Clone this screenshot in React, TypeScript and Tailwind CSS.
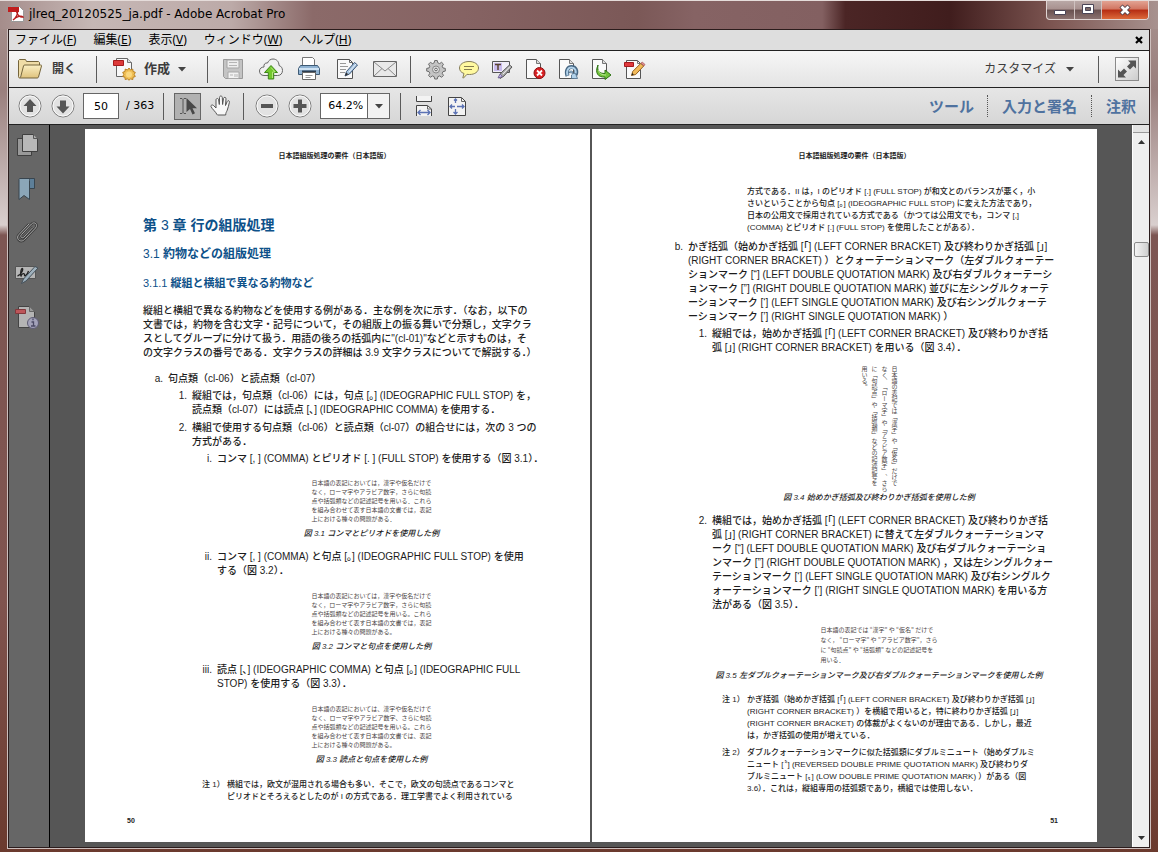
import React from 'react';

const Menu = ({ name, mnemonic }: { name: string, mnemonic: string }) => (
  <button className="whitespace-nowrap leading-[20px]">
    {name}(<span className="underline underline-offset-1">{mnemonic}</span>)
  </button>
);

const Divider = () => <div className="h-[27px] w-px shrink-0 bg-[#5a5a5a]" />;

const DownArrow = () => (
  <svg width="8" height="5" viewBox="0 0 8 5" className="shrink-0"><path d="M0 0h8L4 4.6z" fill="#444" /></svg>
);

const IconButton = ({ label, children, className }: { label: string, children: React.ReactNode, className?: string }) => (
  <button aria-label={label} className={className || "flex h-6 w-6 shrink-0 items-center justify-center"}>
    <svg width="24" height="24" viewBox="0 0 24 24" fill="none" className="shrink-0">{children}</svg>
  </button>
);

// Sheet with a folded corner, shared by most of the document icons
const Sheet = ({ fill = '#fafafa' }: { fill?: string }) => (
  <>
    <path d="M3.5 2.5h10l4 4v15h-14z" fill={fill} stroke="#555" />
    <path d="M13.5 2.5v4h4" fill="#ddd" stroke="#777" />
  </>
);

const PdfMark = () => (
  <svg width="16" height="16" viewBox="0 0 16 16">
    <path d="M3.5.5h8l4 4v11h-12z" fill="#fff" stroke="#999" />
    <path d="M0 1h11v5H0z" fill="#c11d1d" />
    <path d="M5 14c3-2 5-6 4.500-9C9 3 7.500 4 9 7c1.500 3 4 4.500 6 4-1.500-1.500-6-1-10 3" fill="none" stroke="#b71c1c" strokeWidth="1.300" />
  </svg>
);

const Folder = () => (
  <svg width="24" height="20" viewBox="0 0 24 20">
    <defs>
      <linearGradient id="folder" x1="0" y1="0" x2="0" y2="1"><stop stopColor="#fbf0c4" /><stop offset="1" stopColor="#dfc27c" /></linearGradient>
    </defs>
    <path d="M.5 17V1.500L1.500.5h6l1 2h12l1 1V8" fill="#efdca6" stroke="#75653c" />
    <path d="M2.500 18.500L5.500 7c.3-.8.6-1 1.200-1h16c.8 0 1 .4.8 1l-3 11c-.3.700-.6 1-1.200 1H1.500C.8 19 .5 18 .5 17" fill="url(#folder)" stroke="#75653c" />
  </svg>
);

const CreatePdf = () => (
  <svg width="24" height="24" viewBox="0 0 24 24">
    <path d="M4.500 1.500h11l4 4v14h-15z" fill="#f8f8f8" stroke="#666" />
    <path d="M15.500 1.500v4h4" fill="#ddd" stroke="#777" />
    <path d="M1.500 3.500h10v5h-10z" fill="#dd3a3a" stroke="#a61c1c" />
    <path d="M17 11l1.500 2 2.300-.9.200 2.400 2.300.8-1.100 2.200 1.100 2-2.300.8-.2 2.300-2.300-.8-1.500 1.500-1.500-1.500-2.300.8-.2-2.300-2.300-.8 1.100-2-1.100-2.200 2.300-.8.200-2.400 2.300.9z" fill="#f0bf55" stroke="#b98022" />
    <circle cx="17" cy="17.500" r="3" fill="#fad880" />
  </svg>
);

const FILE_TOOLS = [
  { label: '保存', icon: (
    <>
      <path d="M2.500 2.500h19v19h-17l-2-2z" fill="#c4c4c4" stroke="#999" />
      <path d="M6 3h12v8H6z" fill="#ededed" stroke="#a5a5a5" /><path d="M8 5.500h8M8 8.500h8" stroke="#b5b5b5" />
      <path d="M7 15h11v6.500H7z" fill="#f2f2f2" stroke="#a8a8a8" /><path d="M14 17v3M16 17v3M9 18h3" stroke="#b5b5b5" />
    </>
  ) },
  { label: 'クラウド', icon: (
    <>
      <path d="M5 18.500C2 18.500.5 16.500.5 14S2.500 10 5 10c-.5-2.500 1-4.500 3.500-4C9.500 3.500 11.500 2 14 2c3.500 0 6 2.500 6 6.500 2 .5 3.500 2.500 3.500 5 0 3-2 5-5 5z" fill="#f1f1f1" stroke="#666" />
      <path d="M12 8.500l6.500 7h-3.800v6.500H9.300v-6.500H5.500z" fill="#72c72d" stroke="#3d8619" />
      <path d="M12 10.500l4 4.500h-2.500v6" stroke="#b3e77c" />
    </>
  ) },
  { label: '印刷', icon: (
    <>
      <path d="M5.500 9V.5h10l2 2V9" fill="#fff" stroke="#777" />
      <path d="M3.500 8.500h17l2 3v6h-21v-6z" fill="#8fb2d2" stroke="#3d5a75" />
      <path d="M2 12h20" stroke="#cfe3f4" strokeWidth="2" />
      <path d="M5 14.500h14" stroke="#2c3f52" strokeWidth="2" />
      <path d="M5.500 15.500h13v7h-13z" fill="#fff" stroke="#666" /><path d="M8.500 18.500h7M8.500 20.500h5" stroke="#999" />
    </>
  ) },
  { label: '編集', icon: (
    <>
      <path d="M2.500 2.500h12l3 3v16h-15z" fill="#f9f9f9" stroke="#555" /><path d="M14.500 2.500v3h3" stroke="#666" />
      <path d="M5 6.500h6M5 9.500h8M5 12.500h6M5 15.500h5" stroke="#999" />
      <path d="M10 19l1.500-4.500 8-9 3 2.500-8 9z" fill="#a9c5e0" stroke="#3e5878" /><path d="M10 19l1.300-3.500 2 1.800z" fill="#333" />
      <path d="M14 15l7-8" stroke="#e8f2fb" />
    </>
  ) },
  { label: '電子メール', icon: (
    <>
      <path d="M.5 4.500h23v15H.5z" fill="#e9e9e9" stroke="#666" />
      <path d="M1 5l11 9L23 5M1 19l8-7.500M23 19l-8-7.500" stroke="#888" />
    </>
  ) },
];

const QUICK_TOOLS = [
  { label: '設定', icon: (
    <>
      <path d="M10.700 3.500h2.600l.5 2.300 1.800.8 2-1.300 1.900 1.900-1.300 2 .8 1.800 2.300.4v2.700l-2.300.5-.8 1.700 1.300 2.100-1.900 1.900-2-1.400-1.800.8-.5 2.300h-2.600l-.5-2.300-1.800-.8-2 1.400-1.900-1.900 1.300-2.100-.8-1.700-2.300-.5v-2.700l2.300-.4.8-1.800-1.300-2 1.900-1.900 2 1.300 1.800-.8z" fill="#c4c4c4" stroke="#6c6c6c" />
      <circle cx="12" cy="12.500" r="3.500" fill="#dcdcdc" stroke="#8a8a8a" /><circle cx="12" cy="12.500" r="1.300" fill="#fff" stroke="#666" />
    </>
  ) },
  { label: 'ノート注釈', icon: (
    <>
      <path d="M12 4.500c5.500 0 9.500 2.800 9.500 6.500s-3.500 6.500-9 6.500c-1 0-2 0-2.500-.2L6.500 21c-.5.300-1 0-.6-.5L7 16.500c-3-1-4.500-3-4.500-5.500 0-3.700 4-6.500 9.500-6.500z" fill="#fff9a0" stroke="#857d5a" />
      <path d="M7 9.500h10M7 12.500h8" stroke="#857d50" />
    </>
  ) },
  { label: 'テキスト編集', icon: (
    <>
      <path d="M2.500 4.500h17v11h-17z" fill="#f0edf7" stroke="#555" /><path d="M4 6h8v8H4z" fill="#c9bbee" />
      <path d="M5 7.500h6M8 7.500v5.500" stroke="#5b4430" strokeWidth="1.500" />
      <path d="M9 20l2-4 8.500-8 2.500 2-8 9-4 2.500z" fill="#aaa" stroke="#555" /><path d="M13 17l7-7.500" stroke="#eee" /><path d="M8 21l2-4 2.500 2.500z" fill="#cabdea" stroke="#6a5b94" strokeWidth=".8" />
    </>
  ) },
  { label: 'ページを削除', icon: (
    <>
      <Sheet />
      <circle cx="16.500" cy="16" r="5.500" fill="#d81f22" stroke="#8f1214" />
      <path d="M14 13.500l5 5M19 13.500l-5 5" stroke="#fff" strokeWidth="1.800" />
    </>
  ) },
  { label: 'ページを回転', icon: (
    <>
      <Sheet />
      <path d="M11.500 19c-2-6 1-9 4-9 4 0 6 3.500 4 8" stroke="#476783" strokeWidth="4" /><path d="M11.500 18.500c-1.500-5.500 1-8 4-8 3.500 0 5.500 3.500 3.500 7" stroke="#b2d2ea" strokeWidth="2" />
      <path d="M13 15.500c1-2 4-2 4 .5 0 1-1 1.500-1.500 2v3.500h6l-2-5z" fill="#b2d2ea" stroke="#476783" strokeWidth=".8" />
    </>
  ) },
  { label: 'ページを抽出', icon: (
    <>
      <Sheet />
      <path d="M9 8c-1 6 1 8.500 7 8.500V13l6 5-6 4.500V20c-7 .5-10.500-4-7-12z" fill="#73c43c" stroke="#2f7416" />
      <path d="M9.500 13c1 3.500 3 5 7.500 5" stroke="#b9e98f" />
    </>
  ) },
  { label: 'PDFを編集', icon: (
    <>
      <path d="M4.500 3.500h11l3 3v15h-14z" fill="#fafafa" stroke="#555" /><path d="M15.500 3.500v3h3" stroke="#777" />
      <path d="M2.500 5.500h9v4h-9z" fill="#e03a3d" stroke="#a5191c" />
      <path d="M9.500 18.500l1.200-4 8-8 3 2.500-8 8.500z" fill="#f3bb5a" stroke="#94601d" /><path d="M19 6.200l3 2.700 1-1.400-2.800-2.500z" fill="#e69090" stroke="#a15050" strokeWidth=".7" /><path d="M9.500 18.500l.8-2.500 1.500 1.600z" fill="#222" />
    </>
  ) },
];

const SIDE_PANELS = [
  { label: 'ページサムネール', icon: (
    <><path d="M2.500 5.500h14v17h-14z" fill="#999" stroke="#3f3f3f" /><path d="M7.500 1.500h11l4 4v13h-15z" fill="#b8b8b8" stroke="#3f3f3f" /><path d="M18.500 1.500v4h4" fill="#aaa" stroke="#555" /></>
  ) },
  { label: 'しおり', icon: (
    <><path d="M13.500 2.500h6v10h-6z" fill="#5d7f99" stroke="#38454f" /><path d="M4.500 2.500h11c-1 .5-1 1-1 2v19l-5.500-4-5 4v-20z" fill="#8ba6b8" stroke="#38454f" /></>
  ) },
  { label: '添付ファイル', icon: (
    <><path d="M18 8.500l-9 9.500c-2 2-4.500-.5-2.500-2.500L16.500 5c3-3 7 .5 4 4L9.500 20.500C5.500 24.500 0 19.500 4 15.500L14 5" stroke="#3d3d3d" strokeWidth="2.500" /><path d="M18 8.500l-9 9.500c-2 2-4.500-.5-2.500-2.500L16.500 5c3-3 7 .5 4 4L9.500 20.500C5.500 24.500 0 19.500 4 15.500L14 5" stroke="#aaa" /></>
  ) },
  { label: '署名', icon: (
    <><path d="M.5 4.500h20v12H.5z" fill="#b5b5b5" stroke="#555" /><path d="M2.500 14c4-1 6-7 5-7.500C6 6 5 13 6 14c1-3 4-3 3.500-1-.3 2 3 0 4-4" stroke="#222" strokeWidth="1.300" /><path d="M6.500 21.500l2-4.500L20 4.500l3 1.500L11 19z" fill="#9fb1bd" stroke="#44505a" /></>
  ) },
  { label: 'モデルツリー', icon: (
    <><path d="M3.500 1.500h11l5 5v16h-16z" fill="#b4b4b4" stroke="#444" /><path d="M14.500 1.500v5h5" fill="#999" stroke="#666" /><path d="M.5 4.500h10v4H.5z" fill="#bd565a" stroke="#82383c" /><circle cx="18" cy="18" r="5.500" fill="#a3a2ba" stroke="#5d5b74" /><path d="M16.500 17h2v4M16 21h4.500M18 13.500v1.800" stroke="#4b4a66" strokeWidth="1.300" /></>
  ) },
];

// One typeset line of the document, broken exactly where the PDF breaks it
const Lines = ({ lines }: { lines: string[] }) => (
  <>{lines.map((line, i) => <span key={i} className="block whitespace-nowrap">{line}</span>)}</>
);

const Item = ({ marker, lines, level, className }: { marker: string, lines: string[], level: 1 | 2 | 3, className: string }) => {
  const width = level === 1 ? 'w-[25px]' : level === 2 ? 'w-[49px]' : 'w-[74px]';
  return (
    <div className={`flex text-[10px] leading-[14px] ${className}`}>
      <span className={`${width} shrink-0 pr-[5px] text-right`}>{marker}</span>
      <p><Lines lines={lines} /></p>
    </div>
  );
};

const Note = ({ marker, lines, className }: { marker: string, lines: string[], className: string }) => (
  <div className={`flex pl-[59px] text-[8px] leading-[12px] ${className}`}>
    <span className="w-[25px] shrink-0 whitespace-nowrap">{marker}</span>
    <p><Lines lines={lines} /></p>
  </div>
);

const Figure = ({ lines, caption, indent, leading, className }: { lines: string[], caption: string, indent: string, leading: string, className: string }) => (
  <figure className={`flex flex-col items-center ${indent} ${className}`}>
    <div className={`font-['Noto_Sans_CJK_JP',sans-serif] text-[6px] font-normal text-[#4a4444] ${leading}`}><Lines lines={lines} /></div>
    <figcaption className="whitespace-nowrap text-[8px] leading-[12px] italic">{caption}</figcaption>
  </figure>
);

const PageHeader = () => (
  <p className="text-center text-[7px] font-bold leading-[12px]">日本語組版処理の要件（日本語版）</p>
);

const sample = (comma: string, stop: string) => [
  `日本語の表記においては${comma}漢字や仮名だけで`,
  `なく${comma}ローマ字やアラビア数字${comma}さらに句読`,
  `点や括弧類などの記述記号を用いる${stop}これら`,
  `を組み合わせて表す日本語の文書では${comma}表記`,
  `上における種々の問題がある${stop}`,
];

const PAGE = "flex min-w-0 flex-1 flex-col overflow-hidden bg-white pt-[21px] pb-[15px] font-['Liberation_Sans','Noto_Sans_CJK_JP',sans-serif] font-medium text-[#1c1c1c]";

const LeftPage = () => (
  <article className={`${PAGE} pl-[58px] pr-[64px]`}>
    <PageHeader />
    <div className="font-bold text-[#0d5189]">
      <h1 className="mt-[53px] text-[14px] leading-[20px]">第 <span className="font-normal">3</span> 章 行の組版処理</h1>
      <h2 className="mt-[9px] text-[12px] leading-[20px]"><span className="font-normal">3.1</span> 約物などの組版処理</h2>
      <h3 className="mt-[9px] text-[11px] leading-[20px]"><span className="font-normal">3.1.1</span> 縦組と横組で異なる約物など</h3>
    </div>
    <p className="mt-[11px] text-[10px] leading-[14px]">
      <Lines lines={[
        '縦組と横組で異なる約物などを使用する例がある．主な例を次に示す．（なお，以下の',
        '文書では，約物を含む文字・記号について，その組版上の振る舞いで分類し，文字クラ',
        'スとしてグループに分けて扱う．用語の後ろの括弧内に"(cl-01)"などと示すものは，そ',
        'の文字クラスの番号である．文字クラスの詳細は 3.9 文字クラスについてで解説する．）',
      ]} />
    </p>
    <Item level={1} marker="a." className="mt-[12px]" lines={['句点類（cl-06）と読点類（cl-07）']} />
    <Item level={2} marker="1." className="mt-[3px]" lines={[
      '縦組では，句点類（cl-06）には，句点 [｡] (IDEOGRAPHIC FULL STOP) を，',
      '読点類（cl-07）には読点 [､] (IDEOGRAPHIC COMMA) を使用する．',
    ]} />
    <Item level={2} marker="2." className="mt-[4px]" lines={['横組で使用する句点類（cl-06）と読点類（cl-07）の組合せには，次の 3 つの', '方式がある．']} />
    <Item level={3} marker="i." className="mt-[3px]" lines={['コンマ [, ] (COMMA) とピリオド [. ] (FULL STOP) を使用する（図 3.1）．']} />
    <Figure indent="ml-[74px]" leading="mb-[5px] leading-[9px]" className="mt-[12px]" lines={sample('，', '．')} caption="図 3.1 コンマとピリオドを使用した例" />
    <Item level={3} marker="ii." className="mt-[10px]" lines={['コンマ [, ] (COMMA) と句点 [｡] (IDEOGRAPHIC FULL STOP) を使用', 'する（図 3.2）．']} />
    <Figure indent="ml-[74px]" leading="mb-[5px] leading-[9px]" className="mt-[13px]" lines={sample('，', '。')} caption="図 3.2 コンマと句点を使用した例" />
    <Item level={3} marker="iii." className="mt-[10px]" lines={['読点 [､] (IDEOGRAPHIC COMMA) と句点 [｡] (IDEOGRAPHIC FULL', 'STOP) を使用する（図 3.3）．']} />
    <Figure indent="ml-[74px]" leading="mb-[5px] leading-[9px]" className="mt-[13px]" lines={sample('、', '。')} caption="図 3.3 読点と句点を使用した例" />
    <Note marker="注 1）" className="mt-[13px]" lines={[
      '横組では，欧文が混用される場合も多い．そこで，欧文の句読点であるコンマと',
      'ピリオドとそろえるとしたのが I の方式である．理工学書でよく利用されている',
    ]} />
    <p className="-ml-4 mt-auto text-[7px] font-bold leading-[12px]">50</p>
  </article>
);

const RightPage = () => (
  <article className={`${PAGE} pl-[71px] pr-[51px]`}>
    <PageHeader />
    <Note marker="" className="mt-[24px]" lines={[
      '方式である．II は，I のピリオド [.] (FULL STOP) が和文とのバランスが悪く，小',
      'さいということから句点 [｡] (IDEOGRAPHIC FULL STOP) に変えた方法であり，',
      '日本の公用文で採用されている方式である（かつては公用文でも，コンマ [,]',
      '(COMMA) とピリオド [.] (FULL STOP) を使用したことがある）．',
    ]} />
    <Item level={1} marker="b." className="mt-[6px]" lines={[
      'かぎ括弧（始めかぎ括弧 [｢] (LEFT CORNER BRACKET) 及び終わりかぎ括弧 [｣]',
      '(RIGHT CORNER BRACKET) ）とクォーテーションマーク（左ダブルクォーテー',
      'ションマーク [“] (LEFT DOUBLE QUOTATION MARK) 及び右ダブルクォーテーシ',
      'ョンマーク [”] (RIGHT DOUBLE QUOTATION MARK) 並びに左シングルクォーテ',
      'ーションマーク [‘] (LEFT SINGLE QUOTATION MARK) 及び右シングルクォーテ',
      'ーションマーク [’] (RIGHT SINGLE QUOTATION MARK) ）',
    ]} />
    <Item level={2} marker="1." className="mt-[3px]" lines={[
      '縦組では，始めかぎ括弧 [｢] (LEFT CORNER BRACKET) 及び終わりかぎ括',
      '弧 [｣] (RIGHT CORNER BRACKET) を用いる（図 3.4）．',
    ]} />
    <Figure indent="ml-[49px]" leading="leading-[10px] [writing-mode:vertical-rl]" className="mt-[11px]" caption="図 3.4 始めかぎ括弧及び終わりかぎ括弧を使用した例" lines={[
      '日本語の表記では「漢字」や「仮名」だけで',
      'なく、「ローマ字」や「アラビア数字」、さら',
      'に「句読点」や「括弧類」などの記述記号を',
      '用いる。',
    ]} />
    <Item level={2} marker="2." className="mt-[10px]" lines={[
      '横組では，始めかぎ括弧 [｢] (LEFT CORNER BRACKET) 及び終わりかぎ括',
      '弧 [｣] (RIGHT CORNER BRACKET) に替えて左ダブルクォーテーションマ',
      'ーク [“] (LEFT DOUBLE QUOTATION MARK) 及び右ダブルクォーテーショ',
      'ンマーク [”] (RIGHT DOUBLE QUOTATION MARK) ，又は左シングルクォー',
      'テーションマーク [‘] (LEFT SINGLE QUOTATION MARK) 及び右シングルク',
      'ォーテーションマーク [’] (RIGHT SINGLE QUOTATION MARK) を用いる方',
      '法がある（図 3.5）．',
    ]} />
    <Figure indent="ml-[49px]" leading="mb-[5px] leading-[10px]" className="mt-[13px]" caption="図 3.5 左ダブルクォーテーションマーク及び右ダブルクォーテーションマークを使用した例" lines={[
      '日本語の表記では “漢字” や “仮名” だけで',
      'なく， “ローマ字” や “アラビア数字”，さら',
      'に “句読点” や “括弧類” などの記述記号を',
      '用いる．',
    ]} />
    <Note marker="注 1）" className="mt-[12px]" lines={[
      'かぎ括弧（始めかぎ括弧 [｢] (LEFT CORNER BRACKET) 及び終わりかぎ括弧 [｣]',
      '(RIGHT CORNER BRACKET) ）を横組で用いると，特に終わりかぎ括弧 [｣]',
      '(RIGHT CORNER BRACKET) の体裁がよくないのが理由である．しかし，最近',
      'は，かぎ括弧の使用が増えている．',
    ]} />
    <Note marker="注 2）" className="mt-[5px]" lines={[
      'ダブルクォーテーションマークに似た括弧類にダブルミニュート（始めダブルミ',
      'ニュート [〝] (REVERSED DOUBLE PRIME QUOTATION MARK) 及び終わりダ',
      'ブルミニュート [〟] (LOW DOUBLE PRIME QUOTATION MARK) ）がある（図',
      '3.6）．これは，縦組専用の括弧類であり，横組では使用しない．',
    ]} />
    <p className="-mr-3 mt-auto text-right text-[7px] font-bold leading-[12px]">51</p>
  </article>
);

const TitleBar = () => (
  <header className="flex h-[29px] items-start justify-between border-t border-[#e5dcda] bg-[linear-gradient(90deg,#a58d8b_0%,#c6b7b5_8%,#bcaaa8_20%,#8b6a69_27%,#866363_40%,#7b5857_55%,#866364_60%,#836061_71%,#4b2525_73%,#401d1d_82%,#7d5652_91%,#a8928f_100%)]">
    <div className="flex items-center gap-[5px] pl-2 pt-[4px]">
      <PdfMark />
      <h1 className="whitespace-nowrap font-['DejaVu_Sans',sans-serif] text-[12px] leading-[18px] text-black">jlreq_20120525_ja.pdf - Adobe Acrobat Pro</h1>
    </div>
    <div className="mr-[9px] flex h-[19px] overflow-hidden rounded-b-[4px] border border-t-0 border-[#e0d5d3] bg-[linear-gradient(#b9a8a6_0%,#a8918f_45%,#68504f_50%,#8b7270_100%)]">
      <button aria-label="最小化" className="flex w-[28px] items-center justify-center border-r border-[#cfc2c0]">
        <svg width="13" height="13"><path d="M.5 6.500h11v4H.5z" fill="#fff" stroke="#4b4556" /></svg>
      </button>
      <button aria-label="元に戻す" className="flex w-[27px] items-center justify-center border-r border-[#cfc2c0]">
        <svg width="13" height="12"><path d="M.5.5h11v9H.5z" fill="#fff" stroke="#4b4556" /><path d="M3.500 3.500h5v3h-5z" fill="#7d6967" stroke="#4b4556" /></svg>
      </button>
      <button aria-label="閉じる" className="flex w-[46px] items-center justify-center bg-[linear-gradient(#e2a393_0%,#d17561_45%,#b52c12_50%,#dc6a3b_100%)]">
        <svg width="14" height="12"><path d="M3 2l8 8M11 2l-8 8" stroke="#504048" strokeWidth="4.500" /><path d="M3.500 2.500l7 7M10.500 2.500l-7 7" stroke="#fff" strokeWidth="2.800" /></svg>
      </button>
    </div>
  </header>
);

const FileToolbar = () => (
  <div className="flex h-[37px] items-center border-b border-[#222] bg-gradient-to-b from-[#f6f6f6] to-[#e4e4e4] pl-[9px] pr-[10px] text-[#3c3c3c]">
    <button className="flex items-center gap-[10px] whitespace-nowrap text-[12px] font-bold"><Folder />開く</button>
    <div className="ml-[20px]"><Divider /></div>
    <button className="ml-[15px] flex items-center gap-[8px] whitespace-nowrap text-[13px] font-bold"><CreatePdf />作成<DownArrow /></button>
    <div className="ml-[21px]"><Divider /></div>
    <div className="ml-[13px] flex gap-[14px]">
      {FILE_TOOLS.map((t) => <IconButton key={t.label} label={t.label}>{t.icon}</IconButton>)}
    </div>
    <div className="ml-[13px]"><Divider /></div>
    <div className="ml-[13px] flex gap-[9px]">
      {QUICK_TOOLS.map((t) => <IconButton key={t.label} label={t.label}>{t.icon}</IconButton>)}
    </div>
    <button className="ml-auto flex items-center gap-[10px] whitespace-nowrap text-[12px]">カスタマイズ<DownArrow /></button>
    <div className="ml-[24px] mr-[16px]"><Divider /></div>
    <IconButton label="閲覧モード" className="flex h-6 w-6 shrink-0 items-center justify-center border border-[#8a8a8a] bg-gradient-to-br from-white to-[#ccc]">
      <path d="M13 3.500h8v8l-2.500-2.500-3.500 3.500-3-3 3.500-3.500zM11 20.500H3v-8L5.500 15 9 11.500l3 3L8.500 18z" fill="#555" />
    </IconButton>
  </div>
);

const Round = ({ label, d }: { label: string, d: string }) => (
  <IconButton label={label}>
    <circle cx="12" cy="12" r="11" fill="#e2e2e2" stroke="#7c7c7c" /><circle cx="12" cy="12" r="10" stroke="#fafafa" />
    <path d={d} fill="#555" />
  </IconButton>
);

const ViewToolbar = () => (
  <div className="flex h-[37px] items-center border-b border-[#222] bg-gradient-to-b from-[#e6e6e6] to-[#d6d6d6] pl-[9px] pr-[13px] font-['DejaVu_Sans',sans-serif] text-[11px] text-black">
    <div className="flex gap-[9px]">
      <Round label="前のページ" d="M12 5l6.500 7H15v6H9v-6H5.500z" />
      <Round label="次のページ" d="M12 19.500L5.500 12.500H9v-6h6v6h3.500z" />
    </div>
    <input aria-label="ページ番号" defaultValue="50" className="ml-[8px] h-[26px] w-[36px] border border-[#666] bg-white text-center" />
    <span className="ml-[7px] whitespace-nowrap">/ 363</span>
    <div className="ml-[9px] mr-[10px]"><Divider /></div>
    <IconButton label="選択ツール" className="flex h-[27px] w-[27px] shrink-0 items-center justify-center border border-[#666] bg-[#b1b1b1]">
      <path d="M4 4.500h2l1 1 1-1h2M7 5.500v13M4 19.500h2l1-1 1 1h2" stroke="#555" />
      <path d="M10.500 4v14l3.500-3 2.500 5.500 2.500-1.200-2.500-5h4.500z" fill="#484848" />
    </IconButton>
    <IconButton label="手のひらツール" className="ml-[8px] flex h-6 w-6 shrink-0 items-center justify-center">
      <path d="M8 20.500c-1.500-3-5-5.500-6-8-.4-1.500 1.500-2 2.500-1l2.500 2.500V6c0-2 2.500-2 2.700 0l.6 4.500.2-7c0-2 2.700-2 2.800 0l.3 7 .9-6c.4-1.800 2.600-1.500 2.500.3l-.5 6.700 1.700-4c.7-1.500 2.600-.8 2.200.8-.8 3-1 5-2.200 8-.8 1.800-1.500 2.500-1.500 4.700H8.500z" fill="#f8f8f8" stroke="#555" />
    </IconButton>
    <div className="ml-[10px] mr-[11px]"><Divider /></div>
    <div className="flex gap-[9px]">
      <Round label="ズームアウト" d="M6 10h12v4H6z" />
      <Round label="ズームイン" d="M10 5.500h4V10h4.500v4H14v4.500h-4V14H5.500v-4H10z" />
    </div>
    <div className="ml-[8px] flex h-[26px] w-[70px] border border-[#666] bg-white">
      <input aria-label="ズーム率" defaultValue="64.2%" className="w-[47px] border-r border-[#666] pl-[7px]" />
      <button aria-label="ズーム率を選択" className="flex flex-1 items-center justify-center bg-[#f2f2f2]"><DownArrow /></button>
    </div>
    <div className="ml-[10px] mr-[11px]"><Divider /></div>
    <div className="flex gap-[9px]">
      <IconButton label="幅に合わせる">
        <path d="M4.500 2v5.500h15V2" fill="#f3f3f3" stroke="#444" />
        <path d="M4.500 22V11.500h11l4 3.500v7" fill="#f3f3f3" stroke="#444" /><path d="M15.500 11.500V15h4" stroke="#666" />
        <path d="M6 18.500h12M8.500 16L6 18.500 8.500 21M15.500 16l2.500 2.500-2.500 2.500" stroke="#5b72b4" strokeWidth="1.300" />
      </IconButton>
      <IconButton label="全体表示">
        <path d="M3.500 3.500h13l4 4v14h-17z" fill="#f3f3f3" stroke="#444" /><path d="M16.500 3.500v4h4" stroke="#666" />
        <path d="M10.500 5v4M9 6.500L10.500 5 12 6.500M10.500 20v-5M8.500 18l2 2 2-2M5 12.500h5M7 10.500l-2 2 2 2M19 12.500h-7M17 10.500l2 2-2 2" stroke="#5b72b4" strokeWidth="1.300" />
      </IconButton>
    </div>
    <nav className="ml-auto flex items-center font-['Noto_Sans_CJK_JP',sans-serif] text-[15px] font-bold text-[#4f729f]">
      <button className="whitespace-nowrap pr-[13px]">ツール</button>
      <button className="whitespace-nowrap border-l border-dotted border-[#555] px-[14px]">入力と署名</button>
      <button className="whitespace-nowrap border-l border-dotted border-[#555] pl-[14px]">注釈</button>
    </nav>
  </div>
);

const ScrollBar = () => (
  <div className="flex w-[17px] shrink-0 flex-col items-center border-l border-white bg-[#efefef]">
    <div className="h-[8px] w-full border-b border-[#999] bg-[#e3e3e3]" />
    <button aria-label="上へスクロール" className="flex h-[18px] items-center"><svg width="7" height="4"><path d="M0 4h7L3.500 0z" fill="#333" /></svg></button>
    <div className="mt-[91px] h-[15px] w-[15px] rounded-[2px] border border-[#8b8b8b] bg-gradient-to-r from-[#f5f5f5] to-[#cfcfcf]" />
    <button aria-label="下へスクロール" className="mt-auto flex h-[18px] items-center"><svg width="7" height="4"><path d="M0 0h7L3.500 4z" fill="#333" /></svg></button>
  </div>
);

export default function App() {
  return (
    <div className="flex min-h-screen flex-col bg-[linear-gradient(#a8928f_0px,#9a7f7d_90px,#d9cfce_225px,#7d5653_235px,#80544f_600px,#6b3a2e_100%)] font-['Noto_Sans','Noto_Sans_CJK_JP',sans-serif]">
      <TitleBar />
      <div className="mx-[7px] mb-[3px] flex flex-1 flex-col border border-t-0 border-[#cdbfbd]">
        <div className="flex flex-1 flex-col border border-[#2b1c1c]">
          <div className="flex h-[21px] items-center justify-between border-b border-[#222] bg-[#dedede] pl-[6px] pr-[6px] text-[12px] text-black">
            <nav className="flex gap-[17px]">
              <Menu name="ファイル" mnemonic="F" />
              <Menu name="編集" mnemonic="E" />
              <Menu name="表示" mnemonic="V" />
              <Menu name="ウィンドウ" mnemonic="W" />
              <Menu name="ヘルプ" mnemonic="H" />
            </nav>
            <button aria-label="文書を閉じる"><svg width="8" height="8"><path d="M1 1l6 6M7 1L1 7" stroke="#000" strokeWidth="2.200" /></svg></button>
          </div>
          <FileToolbar />
          <ViewToolbar />
          <main className="flex flex-1">
            <aside className="flex w-[41px] shrink-0 flex-col gap-[19px] border-r border-black bg-[#666] pl-[6px] pt-[8px]">
              {SIDE_PANELS.map((p) => <IconButton key={p.label} label={p.label}>{p.icon}</IconButton>)}
            </aside>
            <section className="flex min-w-0 flex-1 gap-[2px] bg-[#565656] px-[35px] pt-[4px] pb-[5px]">
              <LeftPage />
              <RightPage />
            </section>
            <ScrollBar />
          </main>
        </div>
      </div>
    </div>
  );
}
